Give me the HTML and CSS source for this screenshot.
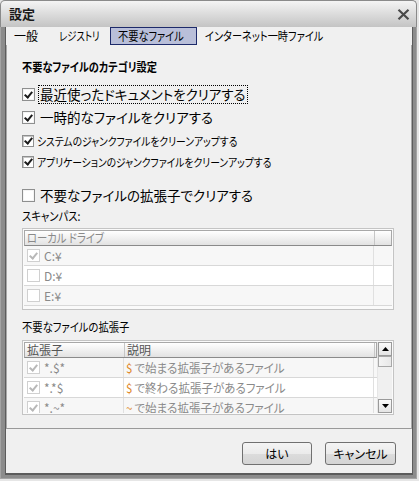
FILE: index.html
```html
<!DOCTYPE html>
<html lang="ja">
<head>
<meta charset="utf-8">
<title>設定</title>
<link rel="stylesheet" href="styles.css">
</head>
<body>
<div class="window">
  <div class="titlebar">
    <span class="title">設定</span>
    <svg class="close" width="13" height="11" viewBox="0 0 13 11"><path d="M1.5 0.8 L11.5 10.2 M11.5 0.8 L1.5 10.2" stroke="#4a4a4a" stroke-width="2.2" fill="none"/></svg>
  </div>
  <div class="frame">
    <div class="inner">
      <div class="tabs">
        <span class="tab t1"><span class="tx">一般</span></span>
        <span class="tab t2"><span class="tx">レジストリ</span></span>
        <span class="tab t3 active"><span class="tx">不要なファイル</span></span>
        <span class="tab t4"><span class="tx">インターネット一時ファイル</span></span>
      </div>
      <div class="panel">
        <div class="heading"><span class="tx">不要なファイルのカテゴリ設定</span></div>
        <div class="opt big r1"><span class="cb on"></span><span class="lbl focus">最近使ったドキュメントをクリアする</span></div>
        <div class="opt big r2"><span class="cb on"></span><span class="lbl">一時的なファイルをクリアする</span></div>
        <div class="opt small r3"><span class="cb sm on"></span><span class="lbl">システムのジャンクファイルをクリーンアップする</span></div>
        <div class="opt small r4"><span class="cb sm on"></span><span class="lbl">アプリケーションのジャンクファイルをクリーンアップする</span></div>
        <div class="opt big r5"><span class="cb"></span><span class="lbl">不要なファイルの拡張子でクリアする</span></div>
        <div class="sub s1"><span class="tx">スキャンパス:</span></div>
        <div class="grid scan">
          <div class="ghead">
            <div class="hc c-drive"><span class="tx">ローカル ドライブ</span></div>
            <div class="hc c-rest"></div>
          </div>
          <div class="grow odd"><div class="gc c-drive"><span class="cb dis on"></span>C:¥</div><div class="gc c-rest"></div></div>
          <div class="grow"><div class="gc c-drive"><span class="cb dis"></span>D:¥</div><div class="gc c-rest"></div></div>
          <div class="grow odd"><div class="gc c-drive"><span class="cb dis"></span>E:¥</div><div class="gc c-rest"></div></div>
        </div>
        <div class="sub s2"><span class="tx">不要なファイルの拡張子</span></div>
        <div class="grid ext">
          <div class="ext-main">
            <div class="ghead dark">
              <div class="hc c-ext">拡張子</div>
              <div class="hc c-desc">説明</div>
              <div class="hc c-pad"></div>
            </div>
            <div class="ext-body">
              <div class="grow odd"><div class="gc c-ext"><span class="cb dis on"></span>*.$*</div><div class="gc c-desc"><span class="tx"><span class="sym">$</span>で始まる拡張子があるファイル</span></div><div class="gc c-pad"></div></div>
              <div class="grow"><div class="gc c-ext"><span class="cb dis on"></span>*.*$</div><div class="gc c-desc"><span class="tx"><span class="sym">$</span>で終わる拡張子があるファイル</span></div><div class="gc c-pad"></div></div>
              <div class="grow odd last"><div class="gc c-ext"><span class="cb dis on"></span>*.~*</div><div class="gc c-desc"><span class="tx"><span class="sym">~</span>で始まる拡張子があるファイル</span></div><div class="gc c-pad"></div></div>
            </div>
          </div>
          <div class="scrollbar">
            <div class="sbtn"><svg width="7" height="4" viewBox="0 0 7 4"><path d="M0 4 L3.5 0 L7 4 Z" fill="#000"/></svg></div>
            <div class="thumb"></div>
            <div class="track"></div>
            <div class="sbtn"><svg width="7" height="4" viewBox="0 0 7 4"><path d="M0 0 L7 0 L3.5 4 Z" fill="#000"/></svg></div>
          </div>
        </div>
      </div>
      <div class="buttons">
        <button class="btn b1">はい</button>
        <button class="btn b2">キャンセル</button>
      </div>
    </div>
  </div>
</div>
</body>
</html>
```
FILE: styles.css
```css
* { box-sizing: border-box; }
html, body { margin: 0; padding: 0; }
body {
  width: 419px;
  height: 481px;
  overflow: hidden;
  background: #e6e6e6;
  font-family: "Noto Sans CJK JP", "Noto Sans", sans-serif;
  font-feature-settings: "palt";
  color: #000;
}
.tx {
  display: inline-block;
  white-space: nowrap;
  transform-origin: left center;
}
.window {
  width: 417px;
  height: 479px;
  display: flex;
  flex-direction: column;
}
.titlebar {
  height: 27px;
  flex: none;
  background: linear-gradient(#f4f4f4, #c4c4c4);
  border: 1px solid #8a8a8a;
  border-bottom: none;
  border-radius: 5px 5px 0 0;
  display: flex;
  align-items: center;
  justify-content: space-between;
  padding: 0 6px 0 8px;
}
.title {
  font-size: 13px;
  font-weight: bold;
  color: #1a1a1a;
  line-height: 16px;
}
.frame {
  flex: 1;
  display: flex;
  flex-direction: column;
  background: #8c8c8c;
  padding: 0 3px 3px 4px;
  border-left: 1px solid #a4a4a4;
  border-right: 1px solid #a4a4a4;
  border-bottom: 1px solid #a4a4a4;
}
.inner {
  flex: 1;
  display: flex;
  flex-direction: column;
  background: #f0f0f0;
  border-left: 1px solid #5c5c5c;
  border-right: 1px solid #5c5c5c;
  border-bottom: 2px solid #5c5c5c;
}
.tabs {
  height: 18px;
  flex: none;
  display: flex;
  align-items: stretch;
  font-size: 12px;
  line-height: 16px;
}
.tab {
  border: 1px solid transparent;
  white-space: nowrap;
  flex: none;
  overflow: visible;
}
.t1 { width: 52px; padding-left: 7px; }
.t2 { width: 52px; padding-left: 0; }
.t2 .tx { transform: scaleX(0.78); }
.t3 { width: 87px; padding-left: 7px; }
.t3 .tx { transform: scaleX(0.85); }
.t4 { padding-left: 7px; }
.t4 .tx { transform: scaleX(0.85); }
.tab.active {
  background: #b9bfd9;
  border-color: #1d2a6a;
}
.panel {
  flex: 1;
  border-left: 1px solid #a8a8a8;
  border-right: 1px solid #a8a8a8;
  border-bottom: 1px solid #999;
  padding: 14px 17px 0 15px;
  display: flex;
  flex-direction: column;
}
.heading {
  font-size: 12px;
  font-weight: bold;
  line-height: 16px;
}
.heading .tx { transform: scaleX(0.85); }
.opt {
  display: flex;
  align-items: center;
}
.opt.big { height: 22px; font-size: 13.5px; }
.opt.small { height: 20px; font-size: 11.5px; }
.opt .lbl {
  white-space: nowrap;
  line-height: 17px;
  display: inline-block;
  transform-origin: left center;
}
.r3 .lbl { transform: scaleX(0.85); }
.r4 .lbl { transform: scaleX(0.85); }
.opt.big .cb { margin-right: 5px; }
.opt.small .cb { margin-right: 3px; }
.r1 { margin-top: 8px; }
.r2 { margin-top: 1px; }
.r3 { margin-top: 3px; }
.r4 { margin-top: 1px; }
.r5 { margin-top: 12px; }
.focus {
  outline: 1px dotted #000;
  outline-offset: 0;
  padding: 0 1px;
  margin-left: -1px;
}
.cb {
  flex: none;
  width: 13px;
  height: 13px;
  border: 1px solid #8e8f8f;
  background: #fff;
  box-shadow: inset 0 0 0 1px #f4f4f4;
  position: relative;
  display: inline-block;
}
.cb.sm { width: 12px; height: 12px; box-shadow: inset 1px 1px 0 #c6c6c6; }
.cb.on::after {
  content: "";
  position: absolute;
  left: 3px;
  top: 1px;
  width: 3px;
  height: 6px;
  border: solid #1c1c1c;
  border-width: 0 2px 2px 0;
  transform: rotate(40deg);
}
.cb.sm.on::after { left: 3px; top: 0px; width: 3px; height: 6px; }
.cb.dis {
  border-color: #d0d0d0;
  box-shadow: none;
  margin: 0 4px 0 3px;
}
.cb.dis.on::after { border-color: #b8b8b8; }
.sub {
  font-size: 12px;
  line-height: 16px;
}
.sub .tx { transform: scaleX(0.86); }
.s1 { margin-top: 2px; }
.s2 { margin-top: 9px; }
.grid {
  border: 1px solid #c4c4c4;
  background: #fafafa;
  padding: 1px;
  font-size: 12px;
}
.scan { margin-top: 4px; height: 82px; }
.ghead {
  display: flex;
  height: 16px;
  background: linear-gradient(#ffffff, #e2e2e2);
  border: 1px solid #a8a8a8;
  border-bottom: 1px solid #8a8a8a;
  color: #8a8a8a;
  line-height: 14px;
}
.ghead.dark { color: #555; }
.hc {
  padding-left: 2px;
  border-right: 1px solid #c6c6c6;
  white-space: nowrap;
}
.c-drive .tx { transform: scaleX(0.86); }
.grow {
  display: flex;
  height: 20px;
  background: #fff;
  border-bottom: 1px solid #d8d8d8;
  color: #8a8a8a;
}
.grow.odd { background: #f7f7f7; }
.grow.last { align-items: flex-start; }
.grow.last .gc { height: 18px; }
.gc {
  display: flex;
  align-items: center;
  border-right: 1px solid #e0e0e0;
  white-space: nowrap;
  overflow: hidden;
}
.c-drive { width: 350px; }
.c-rest { flex: 1; border-right: none; }
.ext { margin-top: 5px; height: 75px; display: flex; padding-right: 1px; }
.ext-main { flex: 1; display: flex; flex-direction: column; min-width: 0; }
.ext-body { height: 55px; overflow: hidden; }
.c-ext { width: 100px; flex: none; }
.c-desc { width: 250px; flex: none; padding-left: 2px; }
.c-desc .tx { transform: scaleX(0.96); }
.c-pad { flex: 1; border-right: none; }
.sym { color: #e0892c; margin-right: 2px; }
.scrollbar {
  width: 15px;
  flex: none;
  display: flex;
  flex-direction: column;
  background: #f0f0f0;
  border-left: 1px solid #e6e6e6;
}
.sbtn {
  height: 14px;
  flex: none;
  border: 1px solid #9a9a9a;
  background: linear-gradient(#fafafa, #e4e4e4);
  display: flex;
  align-items: center;
  justify-content: center;
}
.thumb {
  height: 11px;
  flex: none;
  border: 1px solid #a8a8a8;
  background: linear-gradient(90deg, #f4f4f4, #e8e8e8);
}
.track { flex: 1; }
.buttons {
  height: 44px;
  flex: none;
  display: flex;
  justify-content: flex-end;
  align-items: flex-start;
  gap: 13px;
  padding: 13px 16px 0 0;
}
.btn {
  height: 23px;
  width: 71px;
  border: 1px solid #707070;
  border-radius: 3px;
  background: linear-gradient(#f4f4f4 0%, #ebebeb 50%, #dcdcdc 51%, #d4d4d4 100%);
  font-family: "Noto Sans CJK JP", "Noto Sans", sans-serif;
  font-feature-settings: "palt";
  font-size: 12px;
  color: #000;
  padding: 0;
  line-height: 18px;
}
.btn.b1 { width: 70px; }
```
